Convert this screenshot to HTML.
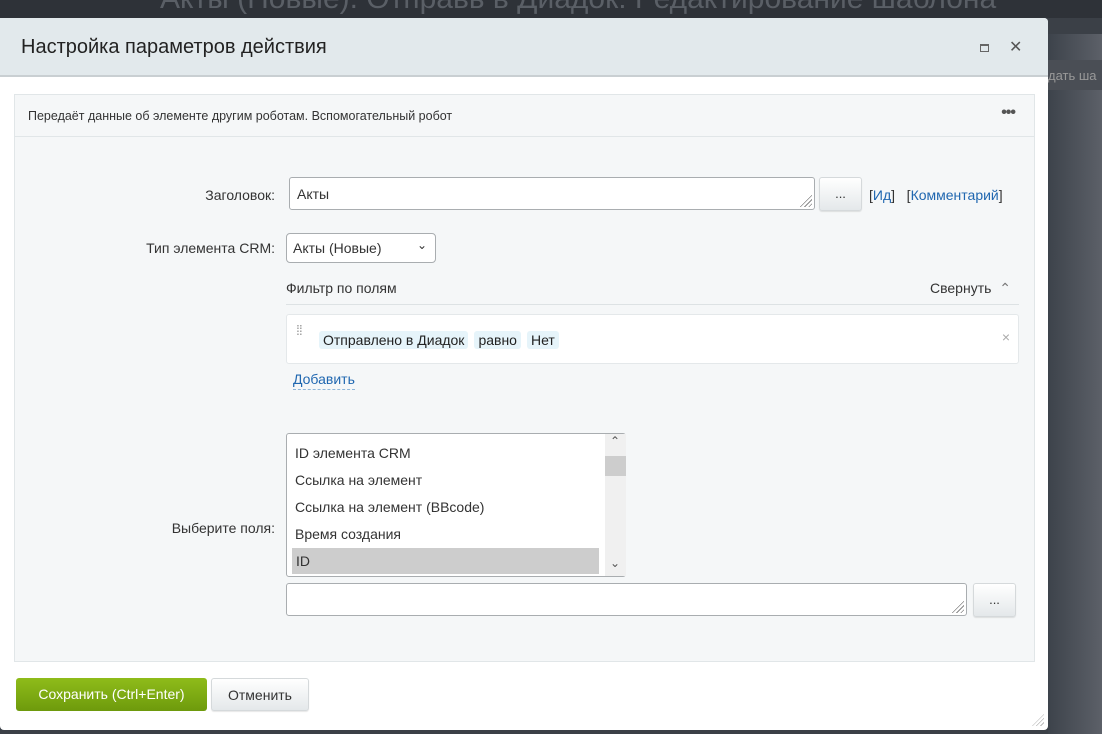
<!DOCTYPE html>
<html><head><meta charset="utf-8"><style>
*{box-sizing:border-box;margin:0;padding:0}
body{width:1102px;height:734px;overflow:hidden;background:#3b4047;font-family:"Liberation Sans","Noto Sans CJK SC",sans-serif;position:relative}
.topbar{position:absolute;left:0;top:0;width:1102px;height:18px;background:#2e3238;overflow:hidden}
.topbar span{position:absolute;left:160px;top:-18px;font-size:30px;color:#5a5f66}
.right{position:absolute;left:1048px;top:34px;width:54px;height:700px;background:linear-gradient(90deg,#3d434b,#5c6068)}
.right2{position:absolute;left:1048px;top:60px;width:54px;height:30px;color:#999;font-size:13px;padding-top:8px;background:#4a4e55}
.modal{position:absolute;left:0;top:18px;width:1048px;height:712px;background:#fff;border-radius:0 4px 4px 4px}
.hdr{height:59px;background:#e2e9ec;border-bottom:2px solid #c9cfd2;position:relative;border-radius:0 4px 0 0}
.hdr h1{position:absolute;left:21px;top:18px;font-weight:normal;font-size:20px;color:#222}
.hdr .max{position:absolute;left:980px;top:26px;width:9px;height:8px;border:1px solid #666;border-top-width:2px}
.hdr .x{position:absolute;left:1009px;top:19px;font-size:16px;color:#555}
.panel{position:absolute;left:14px;top:76px;width:1021px;height:568px;background:#f5f7f8;border:1px solid #e1e6e8}
.desc{height:42px;border-bottom:1px solid #e1e6e8;font-size:12.5px;color:#333;padding:14px 0 0 13px;position:relative}
.desc .dots{position:absolute;right:19px;top:9px;font-size:16px;color:#555;letter-spacing:-1px;font-weight:bold}
.lbl{position:absolute;font-size:14px;color:#333;text-align:right;width:260px}
.inp{position:absolute;background:#fff;border:1px solid #a9adb0;border-radius:3px;font-size:14px;color:#333}
.btn{position:absolute;background:linear-gradient(#fff,#e4e8ea);border:1px solid #d5d9db;border-radius:3px;font-size:13px;text-align:center;color:#333;box-shadow:0 1px 1px rgba(0,0,0,.1)}
.grip{position:absolute;right:2px;bottom:2px;width:14px;height:14px;background:repeating-linear-gradient(135deg,transparent 0 2px,#888 2px 3px);clip-path:polygon(100% 0,100% 100%,0 100%)}
a{color:#2067b0}
.tag{background:#e6f4fa;padding:1px 4px;border-radius:3px;margin-right:6px}
</style></head><body>
<div class="topbar"><span>Акты (Новые). Отправь в Диадок: Редактирование шаблона бизнес-проц</span></div>
<div class="right"></div>
<div class="right2">дать ша</div>
<div class="modal">
 <div class="hdr"><h1>Настройка параметров действия</h1><div class="max"></div><div class="x">✕</div></div>
 <div class="panel">
  <div class="desc">Передаёт данные об элементе другим роботам. Вспомогательный робот<span class="dots">•••</span></div>
 </div>
 <div class="lbl" style="left:15px;top:169px">Заголовок:</div>
 <div class="inp" style="left:289px;top:159px;width:526px;height:33px;padding:8px 7px">Акты<div class="grip"></div></div>
 <div class="btn" style="left:819px;top:159px;width:43px;height:34px;padding-top:8px">...</div>
 <div style="position:absolute;left:869px;top:169px;font-size:14px;color:#333">[<a>Ид</a>]&nbsp;&nbsp;&nbsp;[<a>Комментарий</a>]</div>
 <div class="lbl" style="left:15px;top:222px">Тип элемента CRM:</div>
 <div class="inp" style="left:286px;top:215px;width:150px;height:30px;padding:6px 6px;border-radius:4px">Акты (Новые)<span style="position:absolute;right:8px;top:4px;font-size:12px">⌄</span></div>
 <div style="position:absolute;left:286px;top:262px;font-size:14px;color:#333">Фильтр по полям</div>
 <div style="position:absolute;left:930px;top:262px;font-size:14px;color:#333">Свернуть&nbsp; <span style="color:#777">⌃</span></div>
 <div style="position:absolute;left:286px;top:286px;width:733px;border-top:1px solid #dde2e4"></div>
 <div style="position:absolute;left:286px;top:296px;width:733px;height:50px;background:#fff;border:1px solid #e4e8ea;border-radius:3px">
  <span style="position:absolute;left:9px;top:12px;font-size:14px;color:#999;letter-spacing:-1px;line-height:6px">⁞⁞</span>
  <div style="position:absolute;left:32px;top:17px;font-size:14px;color:#222"><span class="tag">Отправлено в Диадок</span><span class="tag">равно</span><span class="tag">Нет</span></div>
  <span style="position:absolute;right:8px;top:14px;font-size:14px;color:#aaa">×</span>
 </div>
 <div style="position:absolute;left:293px;top:353px;font-size:14px;color:#2067b0;border-bottom:1px dashed #8fb6d8;padding-bottom:2px">Добавить</div>
 <div class="lbl" style="left:15px;top:502px">Выберите поля:</div>
 <div class="inp" style="left:286px;top:415px;width:340px;height:144px;border-radius:3px;font-size:14px">
  <div style="position:absolute;left:8px;top:6px;line-height:27px">ID элемента CRM<br>Ссылка на элемент<br>Ссылка на элемент (BBcode)<br>Время создания</div>
  <div style="position:absolute;left:5px;top:114px;width:307px;height:26px;background:#cdcdcd;padding:5px 4px">ID</div>
  <div style="position:absolute;left:318px;top:0;width:21px;height:142px;background:#f0f0f0"></div>
  <div style="position:absolute;left:318px;top:22px;width:21px;height:20px;background:#cdcdcd"></div>
  <span style="position:absolute;left:323px;top:0px;font-size:12px;color:#555">⌃</span>
  <span style="position:absolute;left:323px;top:122px;font-size:12px;color:#555">⌄</span>
 </div>
 <div class="inp" style="left:286px;top:565px;width:681px;height:33px"><div class="grip"></div></div>
 <div class="btn" style="left:973px;top:565px;width:43px;height:34px;padding-top:8px">...</div>
 <div style="position:absolute;left:16px;top:660px;width:191px;height:33px;background:linear-gradient(#8fbc1a,#6e9a0c);border-radius:3px;color:#fff;font-size:14px;text-align:center;padding-top:8px">Сохранить (Ctrl+Enter)</div>
 <div class="btn" style="left:211px;top:660px;width:98px;height:33px;padding-top:8px;font-size:14px">Отменить</div>
 <div class="grip" style="right:4px;bottom:4px;width:12px;height:12px;background:repeating-linear-gradient(135deg,transparent 0 2px,#bbb 2px 3px)"></div>
</div>
</body></html>
